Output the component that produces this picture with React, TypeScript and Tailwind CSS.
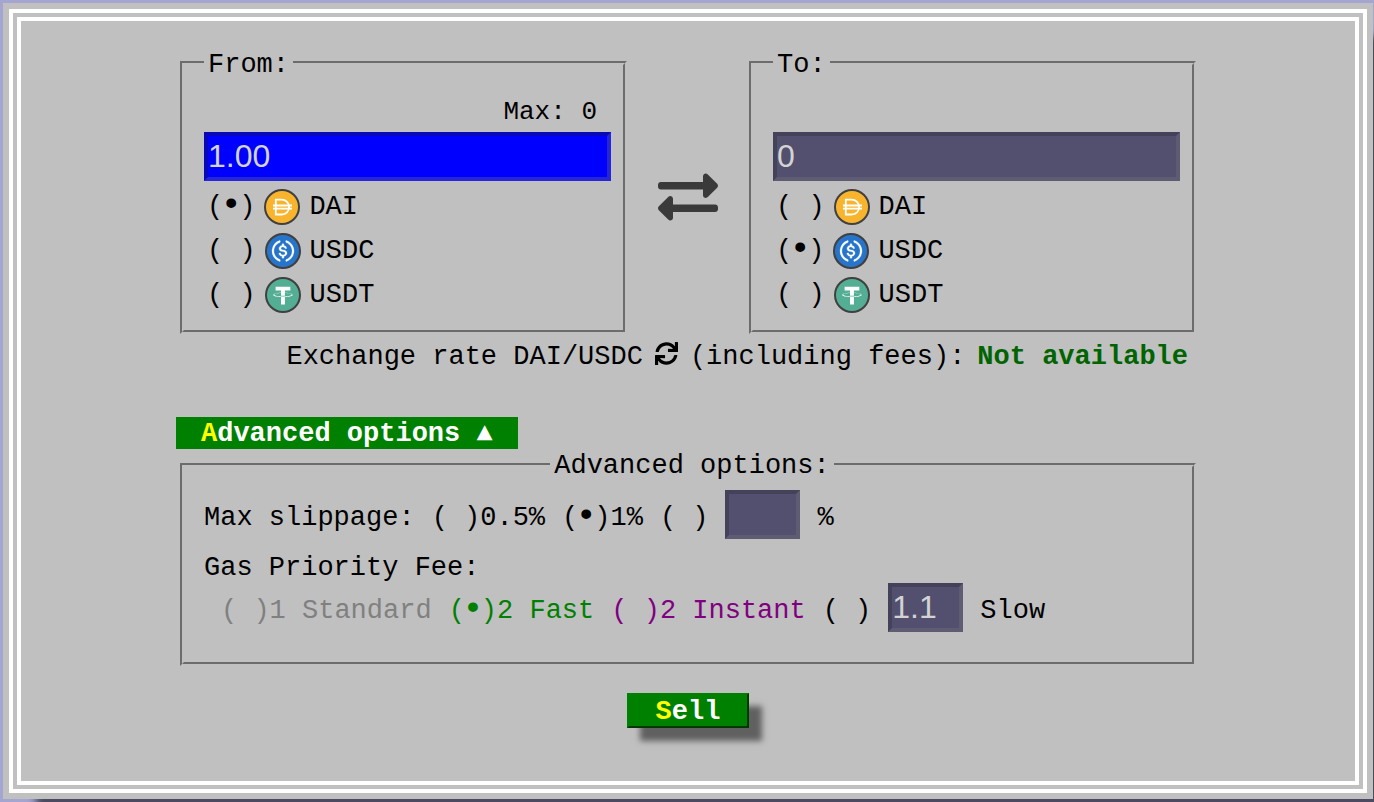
import { useState } from "react";
import type { ReactNode } from "react";
import { FaExchangeAlt, FaSync } from "react-icons/fa";

type Token = "DAI" | "USDC" | "USDT";

const tokens: Token[] = ["DAI", "USDC", "USDT"];

const fieldsetClass = "min-w-0 border-4 border-[#c0c0c0] [border-style:groove] pl-5 pr-3 pb-[13px]";
const inputClass =
  "block h-[49px] min-w-0 rounded-none border-4 p-0 font-['Liberation_Sans',Arial,sans-serif] text-[32px] text-[#d3d3d3] outline-none";
const grayInput = "bg-[#52506e] border-t-[#43425a] border-l-[#43425a] border-r-[#5d5c72] border-b-[#5d5c72]";
const blueInput = "bg-[#0000ff] border-t-[#0808b8] border-l-[#0808b8] border-r-[#2626d6] border-b-[#2626d6]";

const TokenIcon = ({ token }: { token: Token }) => {
  if (token === "DAI") {
    return (
      <svg viewBox="0 0 36 36" className="w-9 h-9 shrink-0" aria-hidden="true">
        <circle cx="18" cy="18" r="17" fill="#f9b42d" stroke="#404040" strokeWidth="2" />
        <g fill="none" stroke="#ffffff" strokeWidth="1.8">
          <path d="M11.8 10.7h5.7c4.6 0 7.6 3.2 7.6 7.4s-3 7.4-7.6 7.4h-5.7z" />
          <path d="M9 16.5h19M9 19.7h19" />
        </g>
      </svg>
    );
  }
  if (token === "USDC") {
    return (
      <svg viewBox="-2 -2 36 36" className="w-9 h-9 shrink-0" aria-hidden="true">
        <circle cx="16" cy="16" r="17" fill="#2775ca" stroke="#404040" strokeWidth="2" />
        <g fill="#ffffff" stroke="#ffffff" strokeWidth="0.3">
          <path d="M20.022 18.124c0-2.124-1.28-2.852-3.84-3.156-1.828-.243-2.193-.728-2.193-1.578 0-.85.61-1.396 1.828-1.396 1.097 0 1.707.364 2.011 1.275a.458.458 0 00.427.303h.975a.416.416 0 00.427-.425v-.06a3.04 3.04 0 00-2.743-2.489V9.142c0-.243-.183-.425-.487-.486h-.915c-.243 0-.426.182-.487.486v1.396c-1.829.242-2.986 1.456-2.986 2.974 0 2.002 1.218 2.791 3.778 3.095 1.707.303 2.255.668 2.255 1.639 0 .97-.853 1.638-2.011 1.638-1.585 0-2.133-.667-2.316-1.578-.06-.242-.244-.364-.427-.364h-1.036a.416.416 0 00-.426.425v.06c.243 1.518 1.219 2.61 3.23 2.914v1.457c0 .242.183.425.487.485h.915c.243 0 .426-.182.487-.485V21.34c1.829-.303 3.047-1.578 3.047-3.217z" />
          <path d="M12.892 24.497c-4.754-1.7-7.192-6.98-5.424-11.653.914-2.55 2.925-4.491 5.424-5.402.244-.121.365-.303.365-.607v-.85c0-.242-.121-.424-.365-.485-.061 0-.183 0-.244.06a10.895 10.895 0 00-7.13 13.717c1.096 3.4 3.717 6.01 7.13 7.102.244.121.488 0 .548-.243.061-.06.061-.122.061-.243v-.85c0-.182-.182-.424-.365-.546zm6.46-18.936c-.244-.122-.488 0-.548.242-.061.061-.061.122-.061.243v.85c0 .243.182.485.365.607 4.754 1.7 7.192 6.98 5.424 11.653-.914 2.55-2.925 4.491-5.424 5.402-.244.121-.365.303-.365.607v.85c0 .242.121.424.365.485.061 0 .183 0 .244-.06a10.895 10.895 0 007.13-13.717c-1.096-3.46-3.778-6.07-7.13-7.162z" />
        </g>
      </svg>
    );
  }
  return (
    <svg viewBox="-2 -2 36 36" className="w-9 h-9 shrink-0" aria-hidden="true">
      <circle cx="16" cy="16" r="17" fill="#53ae94" stroke="#404040" strokeWidth="2" />
      <path
        fill="#ffffff"
        d="M17.922 17.383v-.002c-.11.008-.677.042-1.942.042-1.01 0-1.721-.03-1.971-.042v.003c-3.888-.171-6.79-.848-6.79-1.658 0-.809 2.902-1.486 6.79-1.66v2.644c.254.018.982.061 1.988.061 1.207 0 1.812-.05 1.925-.06v-2.643c3.88.173 6.775.85 6.775 1.658 0 .81-2.895 1.485-6.775 1.657m0-3.59v-2.366h5.414V7.819H8.595v3.608h5.414v2.365c-4.4.202-7.709 1.074-7.709 2.118 0 1.044 3.309 1.915 7.709 2.118v7.582h3.913v-7.584c4.393-.202 7.694-1.073 7.694-2.116 0-1.043-3.301-1.914-7.694-2.117"
      />
    </svg>
  );
};

type RadioProps = {
  name: string;
  value: string;
  checked: boolean;
  onChange: () => void;
  className?: string;
  children?: ReactNode;
};

// text-mode radio: the native input is hidden, the brackets show its state
const Radio = ({ name, value, checked, onChange, className = "", children }: RadioProps) => (
  <label className={`relative flex items-center whitespace-pre cursor-pointer ${className}`}>
    <input
      type="radio"
      name={name}
      value={value}
      checked={checked}
      onChange={onChange}
      aria-label={value}
      className="sr-only"
    />
    <span>
      ({checked ? <b className="inline-flex w-4 justify-center text-[34px] leading-5">•</b> : " "})
    </span>
    {children}
  </label>
);

type CoinBoxProps = {
  id: string;
  title: string;
  max?: string;
  amount: string;
  onAmount: (value: string) => void;
  colors: string;
  token: Token;
  onToken: (token: Token) => void;
};

const CoinBox = ({ id, title, max, amount, onAmount, colors, token, onToken }: CoinBoxProps) => (
  <fieldset className={`flex-1 ${fieldsetClass}`}>
    <legend className="px-1 pt-1">
      <label htmlFor={id}>{title}</label>
    </legend>
    <div className="mt-4 mb-1 h-8 pr-3.5 text-right text-[26px] leading-8">{max && <span>Max: {max}</span>}</div>
    <input
      id={id}
      type="text"
      value={amount}
      onChange={(e) => onAmount(e.target.value)}
      className={`w-full ${inputClass} ${colors}`}
    />
    <div className="mt-1 pl-[3px]">
      {tokens.map((item) => (
        <Radio
          key={item}
          name={`${id}_coin`}
          value={item}
          checked={token === item}
          onChange={() => onToken(item)}
          className="h-11 gap-[9px]"
        >
          <TokenIcon token={item} />
          <span>{item}</span>
        </Radio>
      ))}
    </div>
  </fieldset>
);

const gasOptions = [
  { value: "standard", label: "1 Standard", color: "text-[#808080]" },
  { value: "fast", label: "2 Fast", color: "text-[#008000]" },
  { value: "instant", label: "2 Instant", color: "text-[#800080]" },
];

export default function App() {
  const [fromAmount, setFromAmount] = useState("1.00");
  const [toAmount, setToAmount] = useState("0");
  const [from, setFrom] = useState<Token>("DAI");
  const [to, setTo] = useState<Token>("USDC");
  const [showAdvanced, setShowAdvanced] = useState(true);
  const [slippage, setSlippage] = useState("1");
  const [customSlippage, setCustomSlippage] = useState("");
  const [gas, setGas] = useState("fast");
  const [customGas, setCustomGas] = useState("1.1");

  const swap = () => {
    setFrom(to);
    setTo(from);
  };

  return (
    <div className="flex min-h-screen overflow-hidden bg-[#a5a5d1] pt-[3px] pr-px pb-[3px] pl-[3px] font-['Liberation_Mono','Courier_New',monospace] text-[27px] leading-[30px] text-black">
      <main className="flex-1 min-w-0 bg-[#c0c0c0] p-1.5 shadow-[33px_33px_8px_#4b4a60]">
        <div className="h-full border-[12px] border-double border-white pt-[25px] pb-8">
          <div className="mx-auto max-w-5xl">
            <div className="flex items-center px-1">
              <CoinBox
                id="from"
                title="From:"
                max="0"
                amount={fromAmount}
                onAmount={setFromAmount}
                colors={blueInput}
                token={from}
                onToken={setFrom}
              />
              <button type="button" aria-label="Swap" onClick={swap} className="mx-[31px] mt-3.5 cursor-pointer">
                <FaExchangeAlt className="w-[60px] h-[60px] text-[#3a3a3a]" />
              </button>
              <CoinBox
                id="to"
                title="To:"
                amount={toAmount}
                onAmount={setToAmount}
                colors={grayInput}
                token={to}
                onToken={setTo}
              />
            </div>

            <p className="mt-2 flex justify-end gap-3 pr-3">
              <span>
                Exchange rate {from}/{to}
              </span>
              <button type="button" aria-label="Refresh rate" className="self-start cursor-pointer">
                <FaSync className="w-[23px] h-[23px]" />
              </button>
              <span>(including fees):</span>
              <b className="text-[#006400]">Not available</b>
            </p>

            <button
              type="button"
              onClick={() => setShowAdvanced(!showAdvanced)}
              className="mt-[45px] block h-8 bg-[#008000] px-[25px] pt-0.5 font-bold text-white cursor-pointer"
            >
              <span className="text-[#ffff00]">A</span>dvanced options {showAdvanced ? "▲" : "▼"}
            </button>

            {showAdvanced && (
              <div className="px-1">
                <fieldset className={fieldsetClass}>
                  <legend className="mx-auto px-1 pt-0.5">Advanced options:</legend>
                  <div className="mt-[9px] flex items-baseline gap-[17px]">
                    <span>Max slippage:</span>
                    <Radio name="slippage" value="0.5" checked={slippage === "0.5"} onChange={() => setSlippage("0.5")}>
                      <span>0.5%</span>
                    </Radio>
                    <Radio name="slippage" value="1" checked={slippage === "1"} onChange={() => setSlippage("1")}>
                      <span>1%</span>
                    </Radio>
                    <Radio
                      name="slippage"
                      value="custom"
                      checked={slippage === "custom"}
                      onChange={() => setSlippage("custom")}
                    />
                    <input
                      id="custom_slippage"
                      type="text"
                      value={customSlippage}
                      onChange={(e) => setCustomSlippage(e.target.value)}
                      className={`w-[75px] ${inputClass} ${grayInput}`}
                    />
                    <label htmlFor="custom_slippage">%</label>
                  </div>
                  <p className="mt-3.5">Gas Priority Fee:</p>
                  <div className="flex items-baseline gap-[17px] pl-[17px]">
                    {gasOptions.map((option) => (
                      <Radio
                        key={option.value}
                        name="gas"
                        value={option.value}
                        checked={gas === option.value}
                        onChange={() => setGas(option.value)}
                        className={option.color}
                      >
                        <span>{option.label}</span>
                      </Radio>
                    ))}
                    <Radio name="gas" value="custom" checked={gas === "custom"} onChange={() => setGas("custom")} />
                    <input
                      id="custom_gas"
                      type="text"
                      value={customGas}
                      onChange={(e) => setCustomGas(e.target.value)}
                      className={`w-[75px] ${inputClass} ${grayInput}`}
                    />
                    <label htmlFor="custom_gas">Slow</label>
                  </div>
                  <div className="h-[17px]" />
                </fieldset>
              </div>
            )}

            <div className="mt-[27px] flex justify-center">
              <button
                type="button"
                className="h-[35px] border-2 border-t-[#008000] border-l-[#008000] border-r-[#003800] border-b-[#003800] bg-[#008000] px-[27px] pt-0.5 font-bold text-white shadow-[13px_13px_6px_#606060] cursor-pointer"
              >
                <span className="text-[#ffff00]">S</span>ell
              </button>
            </div>
          </div>
        </div>
      </main>
    </div>
  );
}
